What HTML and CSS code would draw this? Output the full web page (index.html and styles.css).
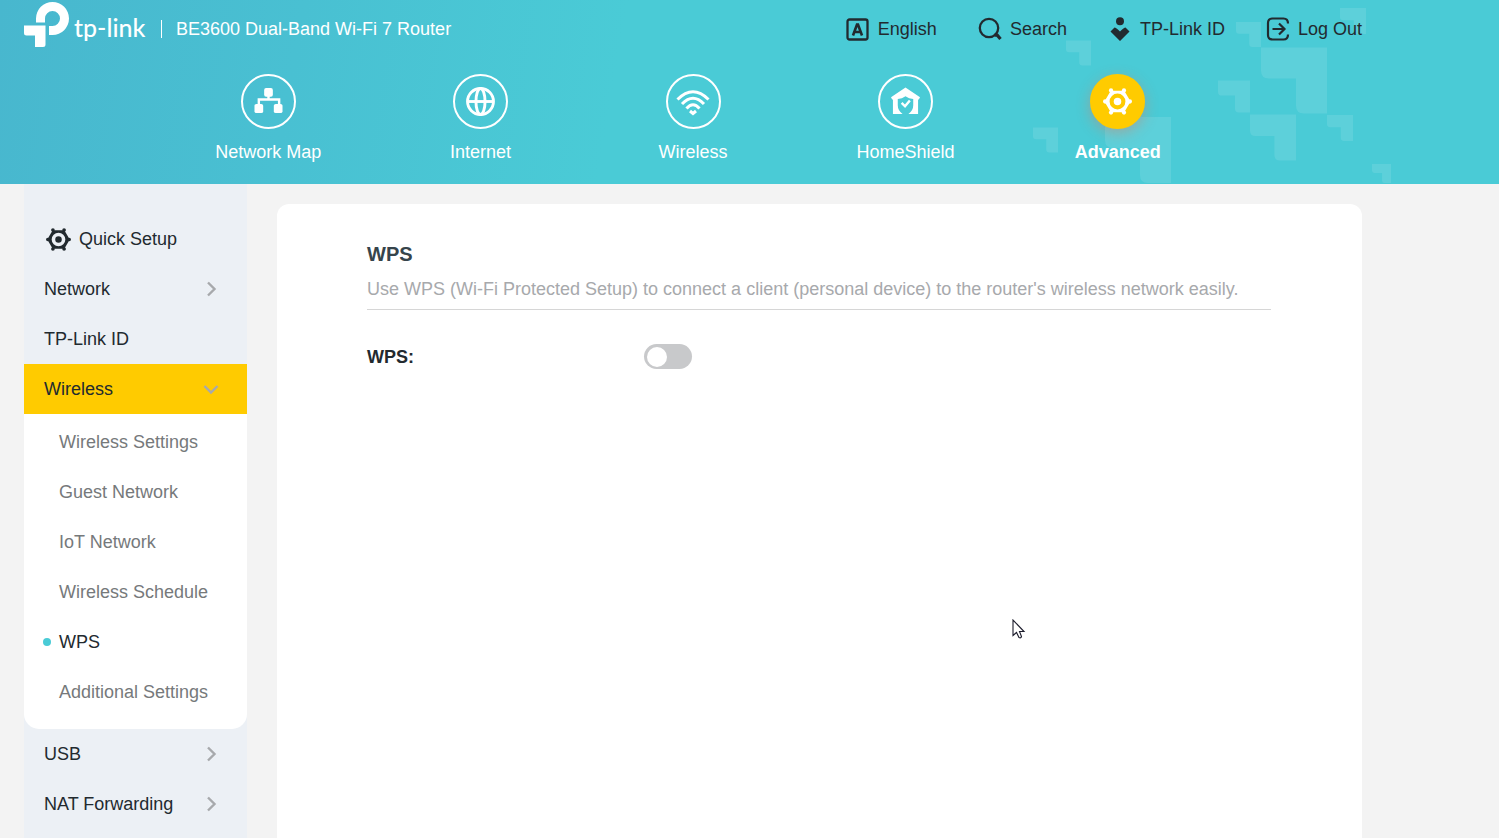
FILE: index.html
```html
<!DOCTYPE html>
<html lang="en">
<head>
<meta charset="utf-8">
<meta name="viewport" content="width=device-width, initial-scale=1">
<title>BE3600 Dual-Band Wi-Fi 7 Router</title>
<link rel="stylesheet" href="styles.css">
</head>
<body>
<svg class="defs" aria-hidden="true">
  <symbol id="corner" viewBox="0 0 66 66"><path d="M0 0H66V66H43q-8 0-8-8V31H8q-8 0-8-8z"/></symbol>
  <symbol id="gear" viewBox="0 0 30 30">
    <g fill="currentColor">
      <path fill-rule="evenodd" d="M8 3.800H22L28.500 15L22 26.200H8L1.500 15ZM15 6.800A8.200 8.200 0 1 0 15 23.200A8.200 8.200 0 1 0 15 6.800Z"/>
      <circle cx="15" cy="15" r="3.900"/>
      <circle cx="8.300" cy="3.600" r="2.200"/><circle cx="21.700" cy="3.600" r="2.200"/>
      <circle cx="8.300" cy="26.400" r="2.200"/><circle cx="21.700" cy="26.400" r="2.200"/>
      <circle cx="2.200" cy="15" r="2.200"/><circle cx="27.800" cy="15" r="2.200"/>
    </g>
  </symbol>
  <symbol id="chevron" viewBox="0 0 16 16"><path d="M5 1.500L11.500 8L5 14.500" fill="none" stroke="#a7a9ac" stroke-width="2.400"/></symbol>
</svg>

<header class="header">
  <svg class="pattern" viewBox="1032 0 360 184" aria-hidden="true">
    <use href="#corner" x="1066" y="40" width="25" height="26"/>
    <use href="#corner" x="1236" y="22" width="25" height="25"/>
    <use href="#corner" x="1340" y="8" width="26" height="26"/>
    <use href="#corner" x="1261" y="47" width="66" height="67"/>
    <use href="#corner" x="1218" y="80" width="32" height="33"/>
    <use href="#corner" x="1250" y="114" width="46" height="47"/>
    <use href="#corner" x="1327" y="115" width="26" height="26"/>
    <use href="#corner" x="1033" y="127" width="25" height="26"/>
    <use href="#corner" x="1105" y="117" width="66" height="66"/>
    <use href="#corner" x="1372" y="164" width="19" height="19"/>
  </svg>
  <div class="container">
    <div class="topbar">
      <div class="brand">
        <svg class="logo-mark" viewBox="0 0 46 46" aria-hidden="true">
          <path fill="#fff" d="M12 20.500V16.500A16.500 16.500 0 0 1 45 16.500A16.500 16.500 0 0 1 28.500 33H25V24H28.500A7.500 7.500 0 1 0 21 16.500V20.500Z"/>
          <path fill="#fff" d="M0 23.500H21.500V42.500Q21.500 45 19 45H11V33.500H2.500Q0 33.500 0 31Z"/>
        </svg>
        <span class="logo-text">tp-link</span>
        <span class="model">BE3600 Dual-Band Wi-Fi 7 Router</span>
      </div>
      <div class="actions">
        <button class="action" type="button">
          <svg viewBox="0 0 24 24"><rect x="1.500" y="2.500" width="20" height="20" rx="2" fill="none" stroke="#222a2f" stroke-width="2.300"/><path d="M7 18.500L11 7.500H12L16 18.500M8.500 15H14.500" fill="none" stroke="#222a2f" stroke-width="2.600"/></svg>
          English
        </button>
        <button class="action" type="button">
          <svg viewBox="0 0 24 24"><circle cx="11" cy="11" r="9.200" fill="none" stroke="#222a2f" stroke-width="2.300"/><path d="M16.500 18H19L22.500 22" fill="none" stroke="#222a2f" stroke-width="3.300"/></svg>
          Search
        </button>
        <button class="action" type="button">
          <svg viewBox="0 0 24 24" fill="#222a2f"><circle cx="12" cy="4.200" r="4"/><path d="M12 24L2.500 14.500L6.500 10.500Q8 10.500 12 14.500Q16 10.500 17.500 10.500L21.500 14.500Z"/></svg>
          TP-Link ID
        </button>
        <button class="action" type="button">
          <svg viewBox="0 0 24 24" fill="none" stroke="#222a2f" stroke-width="2.200"><path d="M22 6.500Q22 1.500 17.500 1.500H6.500Q2 1.500 2 6V18Q2 22.500 6.500 22.500H17.500Q22 22.500 22 17.500"/><path d="M6.500 12H17.500M13 6.500L18.500 12L13 17.500"/></svg>
          Log Out
        </button>
      </div>
    </div>
    <nav class="tabs" aria-label="Main">
      <a class="tab" href="#map"><span class="tab-icon">
        <svg viewBox="0 0 30 30" fill="#fff"><rect x="10.500" y="1" width="9" height="9" rx="2"/><rect x="0.500" y="17.500" width="9" height="9.500" rx="2"/><rect x="20.500" y="17.500" width="9" height="9.500" rx="2"/><path d="M5 18V13H26V18M15 9V13" fill="none" stroke="#fff" stroke-width="2.500"/></svg>
      </span>Network Map</a>
      <a class="tab" href="#internet"><span class="tab-icon">
        <svg viewBox="0 0 30 30" fill="none" stroke="#fff" stroke-width="3"><circle cx="15" cy="15" r="13.400"/><ellipse cx="15" cy="15" rx="4.700" ry="13.400"/><path d="M1.500 15H28.500"/></svg>
      </span>Internet</a>
      <a class="tab" href="#wireless"><span class="tab-icon">
        <svg class="wide" viewBox="0 0 34 30" fill="none" stroke="#fff" stroke-width="3"><path d="M1.500 12.500Q17-3 32.500 12.500"/><path d="M6 17Q17 5.500 28 17"/><path d="M10.500 21.500Q17 14 23.500 21.500"/><path d="M14 24L17 26.500L20 24"/></svg>
      </span>Wireless</a>
      <a class="tab" href="#homeshield"><span class="tab-icon">
        <svg viewBox="0 0 30 30"><path fill="#fff" fill-rule="evenodd" d="M15 0.500L30 10.500L28.800 13H28V28H18Q23 24.500 23 19V12.500Q18.500 12 15 9.500Q11.500 12 7 12.500V19Q7 24.500 12 28H2V13H1.200L0 10.500Z"/><path d="M11 16.500L14.500 20L19.500 14" fill="none" stroke="#fff" stroke-width="2.500"/></svg>
      </span>HomeShield</a>
      <a class="tab active" href="#advanced" aria-current="page"><span class="tab-icon">
        <svg><use href="#gear"/></svg>
      </span>Advanced</a>
    </nav>
  </div>
</header>

<div class="container body">
  <nav class="sidebar" aria-label="Advanced settings">
    <a class="item" href="#quick"><svg class="gear"><use href="#gear"/></svg>Quick Setup</a>
    <a class="item" href="#network">Network<svg class="chevron"><use href="#chevron"/></svg></a>
    <a class="item" href="#tplinkid">TP-Link ID</a>
    <a class="item open" href="#wifi">Wireless<svg class="chevron"><use href="#chevron"/></svg></a>
    <div class="submenu">
      <a class="subitem" href="#settings">Wireless Settings</a>
      <a class="subitem" href="#guest">Guest Network</a>
      <a class="subitem" href="#iot">IoT Network</a>
      <a class="subitem" href="#schedule">Wireless Schedule</a>
      <a class="subitem current" href="#wps">WPS</a>
      <a class="subitem" href="#additional">Additional Settings</a>
    </div>
    <a class="item" href="#usb">USB<svg class="chevron"><use href="#chevron"/></svg></a>
    <a class="item" href="#nat">NAT Forwarding<svg class="chevron"><use href="#chevron"/></svg></a>
  </nav>
  <main class="panel">
    <h1>WPS</h1>
    <p class="intro">Use WPS (Wi-Fi Protected Setup) to connect a client (personal device) to the router's wireless network easily.</p>
    <div class="field">
      <label for="wps-switch">WPS:</label>
      <input class="switch" id="wps-switch" type="checkbox" role="switch">
    </div>
  </main>
</div>

<svg class="cursor" viewBox="0 0 14 20" aria-hidden="true"><path d="M1 1V16.500L4.500 13.500L7 18.500Q9 19.500 9.500 17.500L7.500 12.500H12Z" fill="#fff" stroke="#1c1c2c" stroke-width="1.100"/></svg>
</body>
</html>
```
FILE: styles.css
```css
* { box-sizing: border-box; }

html, body { height: 100%; }

body {
  margin: 0;
  display: flex;
  flex-direction: column;
  min-height: 100%;
  overflow: hidden;
  background: #f3f3f3;
  color: #222a2f;
  font: 18px/24px "Liberation Sans", Arial, sans-serif;
}

a { color: inherit; text-decoration: none; }

.defs { position: absolute; width: 0; height: 0; }

.container { margin: 0 137px 0 24px; }

.header {
  position: relative;
  flex: none;
  height: 184px;
  background: linear-gradient(100deg, #48b7ce 0, #49c0d2 300px, #4acbd6 620px);
}

.header .container { position: relative; }

.pattern {
  position: absolute;
  top: 0;
  right: 107px;
  width: 360px;
  height: 184px;
  fill: #fff;
  opacity: 0.1;
}

.topbar {
  display: flex;
  justify-content: space-between;
  align-items: center;
  height: 58px;
}

.brand { display: flex; align-items: center; color: #fff; white-space: nowrap; }

.logo-mark { width: 46px; height: 46px; margin-bottom: 8px; }

.logo-text { width: 87px; padding: 0 0 5px 4px; font: 500 25px/32px Lato, sans-serif; }

.model { margin-left: 4px; padding-left: 15px; position: relative; }

.model::before {
  content: "";
  position: absolute;
  left: 0;
  top: 3px;
  width: 1px;
  height: 18px;
  background: #fff;
}

.actions { display: flex; gap: 41px; }

.action {
  display: flex;
  align-items: center;
  gap: 8px;
  padding: 0;
  border: 0;
  background: none;
  color: inherit;
  font: inherit;
  white-space: nowrap;
}

.action svg { width: 24px; height: 24px; }

.tabs { display: flex; padding: 16px 138px 0; }

.tab {
  flex: 1;
  display: flex;
  flex-direction: column;
  align-items: center;
  gap: 11px;
  color: #fff;
}

.tab-icon {
  display: grid;
  place-items: center;
  width: 55px;
  height: 55px;
  border: 2px solid #fff;
  border-radius: 50%;
}

.tab-icon svg { width: 29px; height: 29px; }
.tab-icon .wide { width: 34px; height: 30px; }

.tab.active { font-weight: bold; }

.tab.active .tab-icon {
  border-color: #ffcb00;
  background: #ffcb00;
  box-shadow: 0 4px 14px rgba(224, 122, 95, 0.45);
}

.body { flex: 1; display: flex; gap: 30px; min-height: 0; }

.sidebar { flex: none; width: 223px; padding-top: 30px; background: #ecf0f5; }

.item {
  display: flex;
  align-items: center;
  height: 50px;
  padding: 0 28px 0 20px;
}

.gear { width: 25px; height: 25px; margin: 0 8px 0 2px; }

.chevron { width: 16px; height: 16px; margin-left: auto; }

.item.open { background: #ffcb00; }
.item.open .chevron { transform: rotate(90deg); }

.submenu {
  padding: 3px 0 12px;
  border-radius: 0 0 15px 15px;
  background: #fff;
}

.subitem {
  position: relative;
  display: flex;
  align-items: center;
  height: 50px;
  padding-left: 35px;
  color: #76797b;
}

.subitem.current { color: #222a2f; }

.subitem.current::before {
  content: "";
  position: absolute;
  left: 19px;
  top: 21px;
  width: 8px;
  height: 8px;
  border-radius: 50%;
  background: #4acbd6;
}

.panel {
  flex: 1;
  margin-top: 20px;
  padding: 36px 91px 0 90px;
  border-radius: 12px 12px 0 0;
  background: #fff;
}

h1 { margin: 0; color: #36444b; font-size: 20px; line-height: 28px; }

.intro {
  margin: 0;
  padding: 9px 0 8px;
  border-bottom: 1px solid #d6d6d6;
  color: #a7a9ac;
}

.field { display: flex; align-items: center; margin-top: 34px; }

.field label { width: 277px; font-weight: bold; }

.switch {
  appearance: none;
  width: 48px;
  height: 25px;
  margin: 0;
  padding: 3px;
  border-radius: 13px;
  background: #c8c9cb;
}

.switch::before {
  content: "";
  display: block;
  width: 20px;
  height: 20px;
  border-radius: 50%;
  background: #fff;
}

.switch:checked { background: #4acbd6; }
.switch:checked::before { margin-left: auto; }

.cursor { position: absolute; left: 1012px; top: 619px; width: 14px; height: 20px; }
```
